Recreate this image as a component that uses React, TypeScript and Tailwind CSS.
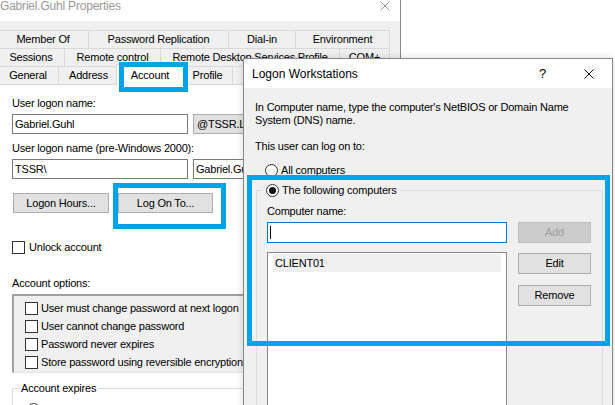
import React from "react";

const font = { fontFamily: '"Liberation Sans", Arial, sans-serif' };

function CloseX({ color }: { color: string }) {
  return (
    <svg width="10" height="10" viewBox="0 0 10 10" className="shrink-0">
      <path d="M0.5 0.5 L9.5 9.5 M9.5 0.5 L0.5 9.5" stroke={color} strokeWidth="1" fill="none" />
    </svg>
  );
}

function Check() {
  return <span className="w-[13px] h-[13px] border border-[#333] bg-white shrink-0" />;
}

function Radio({ on }: { on?: boolean }) {
  return (
    <span className="w-[13px] h-[13px] rounded-full border border-[#333] bg-white shrink-0 flex items-center justify-center">
      {on && <span className="w-[7px] h-[7px] rounded-full bg-[#111]" />}
    </span>
  );
}

function Tab({ w, label }: { w: number; label: string }) {
  return (
    <div
      className="h-full shrink-0 flex items-center justify-center border-l border-t border-[#d9d9d9] bg-[#f0f0f0] whitespace-nowrap overflow-hidden"
      style={{ width: w }}
    >
      {label}
    </div>
  );
}

function WinButton({ label, disabled }: { label: string; disabled?: boolean }) {
  return (
    <div
      className={
        disabled
          ? "w-[73px] h-[21px] shrink-0 flex items-center justify-center border border-[#bfbfbf] bg-[#cccccc] text-[#a0a0a0]"
          : "w-[73px] h-[21px] shrink-0 flex items-center justify-center border border-[#adadad] bg-[#e1e1e1]"
      }
    >
      {label}
    </div>
  );
}

function PropertiesWindow() {
  const options = [
    "User must change password at next logon",
    "User cannot change password",
    "Password never expires",
    "Store password using reversible encryption",
  ];
  return (
    <div className="absolute z-0 left-[-6px] top-[-10px] w-[407px] border border-[#8a8a8a] bg-white flex flex-col">
      {/* title bar */}
      <div className="h-[30px] shrink-0 flex items-center justify-between pl-[5px] pr-[10px] bg-white">
        <span className="text-[#999999] text-[12px]">Gabriel.Guhl Properties</span>
        <CloseX color="#999999" />
      </div>
      <div className="bg-[#f0f0f0] pt-[9px] pl-[2px] flex flex-col">
        <div className="flex h-[18px] shrink-0">
          <Tab w={91} label="Member Of" />
          <Tab w={140} label="Password Replication" />
          <Tab w={67} label="Dial-in" />
          <div className="border-r border-[#d9d9d9] h-full flex">
            <Tab w={94} label="Environment" />
          </div>
        </div>
        <div className="flex h-[18px] shrink-0">
          <Tab w={67} label="Sessions" />
          <Tab w={96} label="Remote control" />
          <Tab w={179} label="Remote Desktop Services Profile" />
          <div className="border-r border-[#d9d9d9] h-full flex">
            <Tab w={50} label="COM+" />
          </div>
        </div>
        <div className="flex h-[18px] shrink-0 relative z-10">
          <Tab w={61} label="General" />
          <Tab w={60} label="Address" />
          <div className="-mx-[2px] -mt-[2px] w-[68px] h-[21px] shrink-0 flex items-center justify-center bg-white border-l border-t border-r border-[#d9d9d9] relative z-10">
            Account
          </div>
          <Tab w={50} label="Profile" />
          <Tab w={78} label="Telephones" />
          <Tab w={80} label="Organization" />
        </div>
        {/* tab page */}
        <div className="h-[360px] bg-white border-t border-l border-[#d9d9d9] pl-[14px] pt-[11px] flex flex-col">
          <div className="h-[15px] leading-[15px]">User logon name:</div>
          <div className="mt-[3px] flex gap-[5px]">
            <div className="w-[176px] h-[20px] border border-[#7a7a7a] bg-white pl-[2px] flex items-center">Gabriel.Guhl</div>
            <div className="w-[150px] h-[20px] border border-[#adadad] bg-[#e1e1e1] pl-[3px] flex items-center">@TSSR.LOCAL</div>
          </div>
          <div className="mt-[7px] h-[15px] leading-[15px]">User logon name (pre-Windows 2000):</div>
          <div className="mt-[3px] flex gap-[5px]">
            <div className="w-[176px] h-[20px] border border-[#7a7a7a] bg-white pl-[2px] flex items-center">TSSR\</div>
            <div className="w-[150px] h-[20px] border border-[#7a7a7a] bg-white pl-[2px] flex items-center">Gabriel.Guhl</div>
          </div>
          <div className="mt-[14px] flex gap-[9px] ml-[1px]">
            <div className="w-[96px] h-[20px] border border-[#adadad] bg-[#e1e1e1] flex items-center justify-center">Logon Hours...</div>
            <div className="w-[95px] h-[20px] border border-[#adadad] bg-[#e1e1e1] flex items-center justify-center">Log On To...</div>
          </div>
          <div className="mt-[27px] h-[15px] flex items-center gap-[4px]">
            <Check />
            <span>Unlock account</span>
          </div>
          <div className="mt-[21px] h-[15px] leading-[15px]">Account options:</div>
          <div className="mt-[3px] w-[250px] h-[79px] shrink-0 border-l-2 border-t-2 border-[#a0a0a0] border-b border-b-[#e3e3e3] bg-[#f0f0f0] pl-[11px] pt-[3px] flex flex-col">
            {options.map((o) => (
              <div key={o} className="h-[18px] shrink-0 flex items-center gap-[3px] whitespace-nowrap">
                <Check />
                <span>{o}</span>
              </div>
            ))}
          </div>
          <fieldset className="mt-[8px] w-[250px] h-[60px] shrink-0 border border-[#dcdcdc]">
            <legend className="ml-[6px] px-[2px] h-[15px] leading-[15px]">Account expires</legend>
            <div className="mt-[6px] ml-[14px] h-[15px] flex items-center">
              <Radio />
            </div>
          </fieldset>
        </div>
      </div>
    </div>
  );
}

function LogonWorkstations() {
  return (
    <div className="absolute z-10 left-[243px] top-[58px] w-[370px] border border-[#888888] bg-[#f0f0f0] flex flex-col shadow-[0_0_8px_rgba(0,0,0,0.15)]">
      <div className="h-[29px] shrink-0 bg-white flex items-center pl-[8px] pr-[18px]">
        <span className="flex-1 text-[12px] tracking-normal">Logon Workstations</span>
        <span className="text-[13px] mr-[38px]">?</span>
        <CloseX color="#111111" />
      </div>
      <div className="pl-[11px] pt-[13px] flex flex-col">
        <div className="leading-[13px]">
          In Computer name, type the computer's NetBIOS or Domain Name
          <br />
          System (DNS) name.
        </div>
        <div className="mt-[12px] h-[15px] leading-[15px]">This user can log on to:</div>
        <div className="mt-[9px] ml-[10px] h-[15px] flex items-center gap-[3px]">
          <Radio />
          <span>All computers</span>
        </div>
        <fieldset className="mt-[5px] ml-[1px] mr-[9px] h-[230px] shrink-0 border border-[#dcdcdc] pl-[10px]">
          <legend className="ml-[-4px] px-[3px] h-[15px] flex items-center gap-[3px]">
            <Radio on />
            <span>The following computers</span>
          </legend>
          <div className="mt-[6px] h-[15px] leading-[15px]">Computer name:</div>
          <div className="mt-[3px] flex gap-[11px]">
            <div className="w-[240px] h-[21px] border border-[#0078d7] bg-white flex items-center pl-[2px]">
              <span className="w-px h-[13px] bg-black" />
            </div>
            <WinButton label="Add" disabled />
          </div>
          <div className="mt-[9px] flex gap-[11px]">
            <div className="w-[240px] h-[200px] border border-[#828790] bg-white pt-[1px] px-[5px]">
              <div className="h-[18px] bg-[#f0f0f0] flex items-center pl-[2px]">CLIENT01</div>
            </div>
            <div className="mt-[1px] flex flex-col gap-[11px]">
              <WinButton label="Edit" />
              <WinButton label="Remove" />
            </div>
          </div>
        </fieldset>
      </div>
    </div>
  );
}

export default function App() {
  return (
    <div className="relative w-[615px] h-[405px] overflow-hidden bg-white text-[11px] tracking-[-0.2px] text-black" style={font}>
      <PropertiesWindow />
      <LogonWorkstations />
      {/* highlight boxes */}
      <div className="absolute left-[119px] top-[62px] w-[69px] h-[30px] border-[5px] border-[#00a2e8] z-20" />
      <div className="absolute left-[113px] top-[183px] w-[113px] h-[46px] border-[5px] border-[#00a2e8] z-20" />
      <div className="absolute left-[247px] top-[175px] w-[363px] h-[171px] border-[5px] border-[#00a2e8] z-20" />
    </div>
  );
}
